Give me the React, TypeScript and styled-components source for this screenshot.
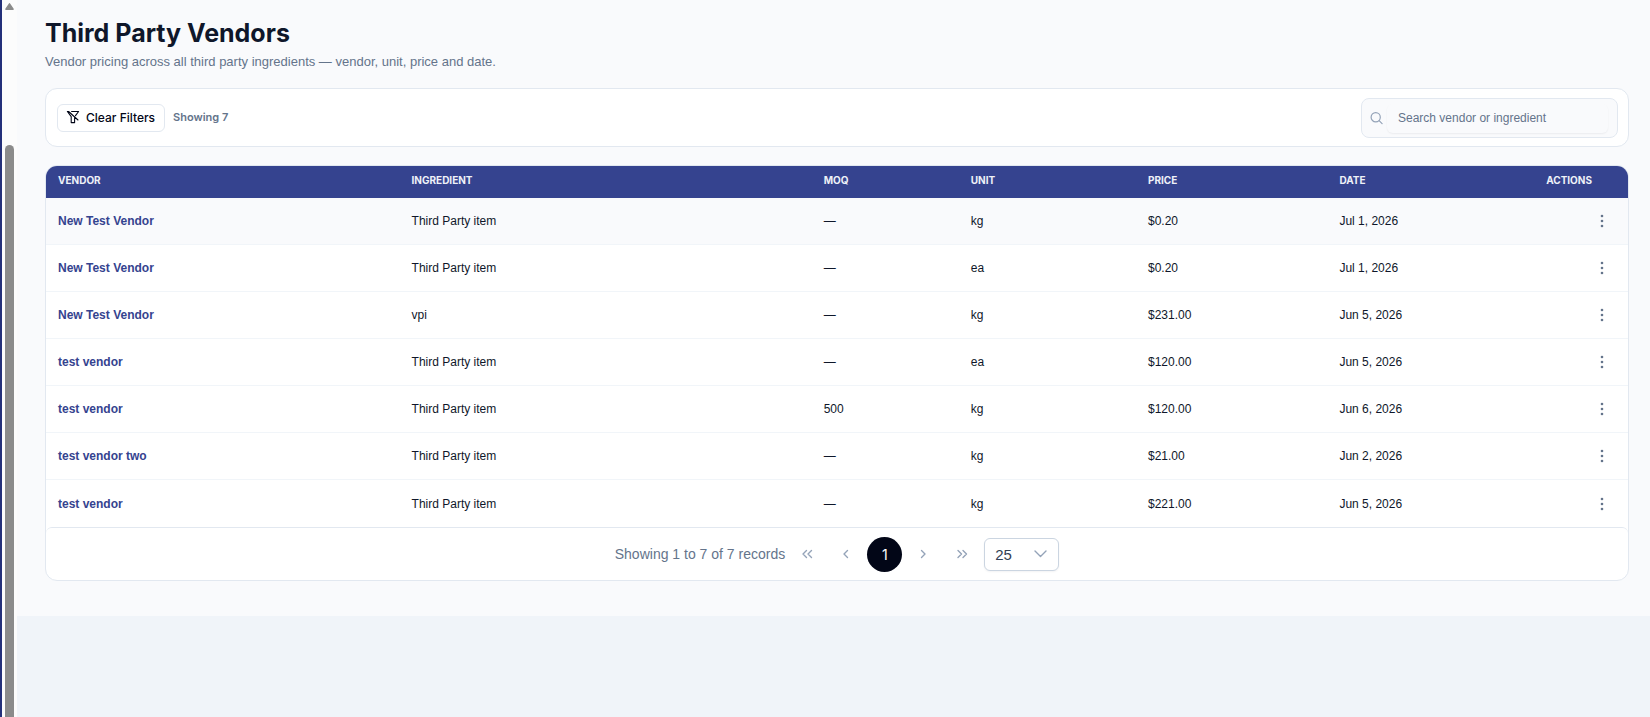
import React, { useState } from "react";
import styled, { createGlobalStyle } from "styled-components";

const color = {
  navy: "#35438f",
  ink: "#0f172a",
  muted: "#64748b",
  faint: "#94a3b8",
  line: "#e2e8f0",
  rowLine: "#f1f5f9",
  surface: "#f9fafc",
};

const display = `Inter, "Liberation Sans", Arial, sans-serif`;

const GlobalStyle = createGlobalStyle`
  *, *::before, *::after { box-sizing: border-box; }
  body { margin: 0; background: #f0f4f9; }
  body, button, input, select {
    font-family: "Liberation Sans", Arial, sans-serif;
    color: ${color.ink};
  }
`;

const Shell = styled.div`
  display: flex;
  align-items: stretch;
  min-height: 100vh;
`;

const SidebarEdge = styled.div`
  flex: 0 0 2px;
  background: #24307a;
`;

const ScrollTrack = styled.div`
  flex: 0 0 15px;
  display: flex;
  flex-direction: column;
  align-items: center;
  padding-top: 3px;
  background: #fcfcfc;
`;

const ScrollThumb = styled.div`
  flex: 1;
  width: 9px;
  margin-top: 135px;
  border-radius: 5px 5px 0 0;
  background: #8b8b8b;
`;

const Content = styled.div`
  flex: 1;
  min-width: 0;
`;

const Main = styled.main`
  padding: 17px 21px 35px 28px;
  background: ${color.surface};
`;

const Title = styled.h1`
  margin: 0 0 4px;
  font-family: ${display};
  font-size: 25px;
  line-height: 32px;
  font-weight: 700;
`;

const Subtitle = styled.p`
  margin: 0 0 17px;
  font-size: 13px;
  line-height: 18px;
  color: ${color.muted};
`;

const Card = styled.section`
  border: 1px solid ${color.line};
  border-radius: 12px;
  background: #fff;
  overflow: hidden;
`;

const Toolbar = styled(Card)`
  display: flex;
  align-items: center;
  gap: 8px;
  margin-bottom: 18px;
  padding: 9px 10px 8px 11px;
`;

const ClearButton = styled.button`
  display: flex;
  align-items: center;
  gap: 6px;
  height: 28px;
  padding: 0 9px 2px 8px;
  border: 1px solid ${color.line};
  border-radius: 6px;
  background: #fff;
  color: #020617;
  font-family: ${display};
  font-size: 12px;
  font-weight: 500;
`;

const Count = styled.span`
  padding-bottom: 2px;
  font-family: ${display};
  font-size: 11px;
  line-height: 16px;
  font-weight: 600;
  color: ${color.muted};
`;

const SearchBox = styled.label`
  display: flex;
  align-items: center;
  gap: 4px;
  width: 257px;
  height: 40px;
  margin-left: auto;
  padding: 0 9px 0 8px;
  border: 1px solid ${color.line};
  border-radius: 8px;
  background: ${color.surface};
`;

const SearchInput = styled.input`
  flex: 1;
  min-width: 0;
  height: 29px;
  padding: 0 12px 0 11px;
  border: 0;
  border-radius: 6px;
  outline: 0;
  background: transparent;
  box-shadow: 0 1px 2px rgba(15, 23, 42, 0.06);
  font-size: 12px;
  &::placeholder { color: ${color.muted}; opacity: 1; }
`;

const Table = styled.table`
  width: 100%;
  table-layout: fixed;
  border-collapse: separate;
  border-spacing: 0;
`;

const Col = styled.col<{ $share?: string }>`
  width: ${(p) => p.$share ?? "auto"};
`;

const HeadCell = styled.th<{ $end?: boolean }>`
  height: 32px;
  padding: 0 ${(p) => (p.$end ? 36 : 12)}px 4px 12px;
  background: ${color.navy};
  color: #eef1f8;
  font-family: ${display};
  font-size: 10px;
  font-weight: 700;
  text-align: ${(p) => (p.$end ? "right" : "left")};
  text-transform: uppercase;
`;

const Cell = styled.td<{ $end?: boolean }>`
  height: 47px;
  padding: 0 12px;
  border-bottom: 1px solid ${color.rowLine};
  font-size: 12px;
  text-align: ${(p) => (p.$end ? "right" : "left")};
`;

const Row = styled.tr<{ $active?: boolean }>`
  background: ${(p) => (p.$active ? color.surface : "#fff")};
  &:last-child ${Cell} { border-bottom: 0; }
`;

const VendorLink = styled.a`
  color: ${color.navy};
  font-weight: 700;
  text-decoration: none;
`;

const MenuButton = styled.button`
  display: inline-flex;
  align-items: center;
  justify-content: center;
  width: 28px;
  height: 28px;
  padding: 0;
  border: 0;
  background: transparent;
  color: ${color.muted};
  vertical-align: middle;
`;

const Paginator = styled.nav`
  display: flex;
  align-items: center;
  justify-content: center;
  gap: 4px;
  height: 53px;
  border-top: 1px solid ${color.line};
  border-radius: 6px;
  color: ${color.muted};
  font-size: 14px;
`;

const PageButton = styled.button<{ $current?: boolean }>`
  display: flex;
  align-items: center;
  justify-content: center;
  width: 35px;
  height: 35px;
  padding: 0;
  border: 0;
  border-radius: 50%;
  background: ${(p) => (p.$current ? "#020617" : "transparent")};
  color: ${(p) => (p.$current ? "#fff" : color.faint)};
  font-family: ${display};
  font-size: 14px;
`;

const PageSize = styled.div`
  display: grid;
  width: 75px;
  height: 33px;
  align-items: center;
  & > * { grid-area: 1 / 1; }
  svg { justify-self: end; margin-right: 11px; pointer-events: none; }
`;

const PageSelect = styled.select`
  appearance: none;
  width: 100%;
  height: 100%;
  padding: 0 10px;
  border: 1px solid #cbd5e1;
  border-radius: 6px;
  background: #fff;
  box-shadow: 0 1px 2px rgba(15, 23, 42, 0.05);
  color: #334155;
  font-size: 15px;
`;

const ScrollArrow = () => (
  <svg width="9" height="7" viewBox="0 0 9 7" aria-hidden="true">
    <path d="M4.5.8 8.1 6.2H.9Z" fill="#8b8b8b" stroke="#8b8b8b" strokeWidth="1.4" strokeLinejoin="round" />
  </svg>
);

const FilterSlashIcon = () => (
  <svg width="14" height="14" viewBox="0 0 14 14" fill="none" stroke="currentColor" strokeWidth="1.1" strokeLinecap="round" strokeLinejoin="round" aria-hidden="true">
    <path d="M5.6 1.5H12.6L9.5 5.6M1.4 1.5 5.2 6.6V12.6H8.6V7.6M1.4 1.5H2.6L12 10" />
  </svg>
);

const SearchIcon = () => (
  <svg width="13" height="13" viewBox="0 0 13 13" fill="none" stroke={color.faint} strokeWidth="1.2" strokeLinecap="round" aria-hidden="true">
    <circle cx="5.7" cy="5.2" r="4.6" />
    <path d="m9.1 8.6 3 3" />
  </svg>
);

const DotsIcon = () => (
  <svg width="4" height="14" viewBox="0 0 4 14" fill="currentColor" aria-hidden="true">
    <circle cx="2" cy="2" r="1.3" />
    <circle cx="2" cy="7" r="1.3" />
    <circle cx="2" cy="12" r="1.3" />
  </svg>
);

const arrows = {
  first: "M7.5 2.5 4 6 7.5 9.5M12.5 2.5 9 6 12.5 9.5",
  prev: "M9.5 2.5 6 6 9.5 9.5",
  next: "M5.5 2.5 9 6 5.5 9.5",
  last: "M3 2.5 6.5 6 3 9.5M8 2.5 11.5 6 8 9.5",
};

const ArrowIcon = ({ kind }: { kind: keyof typeof arrows }) => (
  <svg width="15" height="12" viewBox="0 0 15 12" fill="none" stroke="currentColor" strokeWidth="1.4" strokeLinecap="round" strokeLinejoin="round" aria-hidden="true">
    <path d={arrows[kind]} />
  </svg>
);

const ChevronDown = () => (
  <svg width="14" height="14" viewBox="0 0 14 14" fill="none" stroke={color.faint} strokeWidth="1.4" strokeLinecap="round" strokeLinejoin="round" aria-hidden="true">
    <path d="m1 4 5.5 5.5L12 4" />
  </svg>
);

const columns = [
  { label: "Vendor", share: "22.35%" },
  { label: "Ingredient", share: "26.05%" },
  { label: "MOQ", share: "9.3%" },
  { label: "Unit", share: "11.2%" },
  { label: "Price", share: "12.1%" },
  { label: "Date" },
  { label: "Actions", share: "9.3%" },
];

const rows = [
  ["New Test Vendor", "Third Party item", "—", "kg", "$0.20", "Jul 1, 2026"],
  ["New Test Vendor", "Third Party item", "—", "ea", "$0.20", "Jul 1, 2026"],
  ["New Test Vendor", "vpi", "—", "kg", "$231.00", "Jun 5, 2026"],
  ["test vendor", "Third Party item", "—", "ea", "$120.00", "Jun 5, 2026"],
  ["test vendor", "Third Party item", "500", "kg", "$120.00", "Jun 6, 2026"],
  ["test vendor two", "Third Party item", "—", "kg", "$21.00", "Jun 2, 2026"],
  ["test vendor", "Third Party item", "—", "kg", "$221.00", "Jun 5, 2026"],
];

export default function App() {
  const [query, setQuery] = useState("");
  const needle = query.toLowerCase();
  const shown = rows.filter(([vendor, item]) => `${vendor} ${item}`.toLowerCase().includes(needle));

  return (
    <Shell>
      <GlobalStyle />
      <SidebarEdge />
      <ScrollTrack>
        <ScrollArrow />
        <ScrollThumb />
      </ScrollTrack>
      <Content>
        <Main>
          <Title>Third Party Vendors</Title>
          <Subtitle>Vendor pricing across all third party ingredients — vendor, unit, price and date.</Subtitle>

          <Toolbar>
            <ClearButton type="button" onClick={() => setQuery("")}>
              <FilterSlashIcon />
              Clear Filters
            </ClearButton>
            <Count>Showing {shown.length}</Count>
            <SearchBox>
              <SearchIcon />
              <SearchInput
                type="text"
                aria-label="Search vendor or ingredient"
                placeholder="Search vendor or ingredient"
                value={query}
                onChange={(e) => setQuery(e.target.value)}
              />
            </SearchBox>
          </Toolbar>

          <Card>
            <Table>
              <colgroup>
                {columns.map((c) => <Col key={c.label} $share={c.share} />)}
              </colgroup>
              <thead>
                <tr>
                  {columns.map((c) => (
                    <HeadCell key={c.label} scope="col" $end={c.label === "Actions"}>{c.label}</HeadCell>
                  ))}
                </tr>
              </thead>
              <tbody>
                {shown.map(([vendor, ...values], i) => (
                  <Row key={i} $active={i === 0}>
                    <Cell><VendorLink href="#vendor">{vendor}</VendorLink></Cell>
                    {values.map((v, j) => <Cell key={j}>{v}</Cell>)}
                    <Cell $end>
                      <MenuButton type="button" aria-label={`Actions for ${vendor}`}><DotsIcon /></MenuButton>
                    </Cell>
                  </Row>
                ))}
              </tbody>
            </Table>
            <Paginator aria-label="Pagination">
              <span>Showing 1 to {shown.length} of {shown.length} records</span>
              <PageButton type="button" aria-label="First page"><ArrowIcon kind="first" /></PageButton>
              <PageButton type="button" aria-label="Previous page"><ArrowIcon kind="prev" /></PageButton>
              <PageButton type="button" $current aria-current="page">1</PageButton>
              <PageButton type="button" aria-label="Next page"><ArrowIcon kind="next" /></PageButton>
              <PageButton type="button" aria-label="Last page"><ArrowIcon kind="last" /></PageButton>
              <PageSize>
                <PageSelect aria-label="Records per page" defaultValue="25">
                  <option>10</option>
                  <option>25</option>
                  <option>50</option>
                </PageSelect>
                <ChevronDown />
              </PageSize>
            </Paginator>
          </Card>
        </Main>
      </Content>
    </Shell>
  );
}
